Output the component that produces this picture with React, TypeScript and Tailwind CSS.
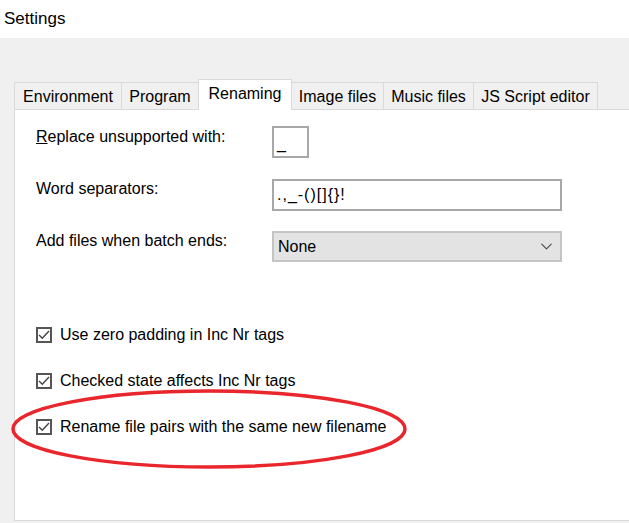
import { ChevronDown } from 'lucide-react';

const tabs = [
  { label: 'Environment', w: 'w-[108px]' },
  { label: 'Program', w: 'w-[78px]' },
  { label: 'Renaming', w: 'w-[94px]', active: true },
  { label: 'Image files', w: 'w-[93px]' },
  { label: 'Music files', w: 'w-[91px]' },
  { label: 'JS Script editor', w: 'w-[125px]' },
];

const options = [
  'Use zero padding in Inc Nr tags',
  'Checked state affects Inc Nr tags',
  'Rename file pairs with the same new filename',
];

const Checkbox = () => (
  <div className="flex h-[16px] w-[16px] shrink-0 items-center justify-center border-2 border-[#555] bg-white">
    <svg width="12" height="12" viewBox="0 0 12 12" fill="none">
      <path d="M1 6 L4.3 9.3 L11 2" stroke="#444" strokeWidth="1.4" />
    </svg>
  </div>
);

export default function App() {
  return (
    <div
      className="relative flex h-[523px] w-[629px] flex-col overflow-hidden bg-[#f0f0f0] text-black"
      style={{ fontFamily: '"Liberation Sans", Arial, sans-serif' }}
    >
      {/* Window title */}
      <div className="h-[38px] bg-white pl-[4px] pt-[7px] text-[17px] leading-[24px]">Settings</div>

      {/* Tab strip */}
      <div className="mt-[41px] flex h-[30px] items-end pl-[14px] text-[16px] leading-[20px]">
        {tabs.map((t, i) =>
          t.active ? (
            <div
              key={t.label}
              className={`${t.w} relative z-10 -mb-px -ml-px h-[31px] border border-b-0 border-[#d9d9d9] bg-white pt-[4px] text-center`}
            >
              {t.label}
            </div>
          ) : (
            <div
              key={t.label}
              className={`${t.w} ${i > 0 ? '-ml-px' : ''} h-[27px] border border-b-0 border-[#d9d9d9] bg-[#f0f0f0] pt-[4px] text-center`}
            >
              {t.label}
            </div>
          )
        )}
      </div>

      {/* Panel */}
      <div className="ml-[14px] mr-[-4px] flex h-[412px] flex-col border border-[#d9d9d9] bg-white pl-[21px] pt-[16px] text-[16px] leading-[20px]">
        <div className="flex items-start">
          <div className="mt-[1px] w-[236px]">
            <span className="underline">R</span>eplace unsupported with:
          </div>
          <div className="flex h-[32px] w-[37px] items-end border-2 border-[#a8a8a8] pb-[2px] pl-[3px]">_</div>
        </div>

        <div className="mt-[21px] flex items-start">
          <div className="w-[236px]">Word separators:</div>
          <div className="flex h-[32px] w-[290px] items-center border-2 border-[#a8a8a8] pl-[3px] tracking-[1px]">
            .,_-()[]{'{}'}!
          </div>
        </div>

        <div className="mt-[20px] flex items-start">
          <div className="w-[236px]">Add files when batch ends:</div>
          <div className="flex h-[31px] w-[290px] items-center justify-between border-2 border-[#c4c4c4] bg-[#e3e3e3] pl-[4px] pr-[4px]">
            <span>None</span>
            <ChevronDown size={19} strokeWidth={1.3} className="text-[#444]" />
          </div>
        </div>

        <div className="mt-[63px] flex flex-col gap-[26px]">
          {options.map((o) => (
            <div key={o} className="flex h-[20px] items-center gap-[8px]">
              <Checkbox />
              <span>{o}</span>
            </div>
          ))}
        </div>
      </div>

      {/* Red annotation ellipse */}
      <svg className="pointer-events-none absolute left-0 top-0" width="629" height="523">
        <ellipse cx="209" cy="429" rx="196" ry="38" fill="none" stroke="#e8262b" strokeWidth="3.5" />
      </svg>
    </div>
  );
}
